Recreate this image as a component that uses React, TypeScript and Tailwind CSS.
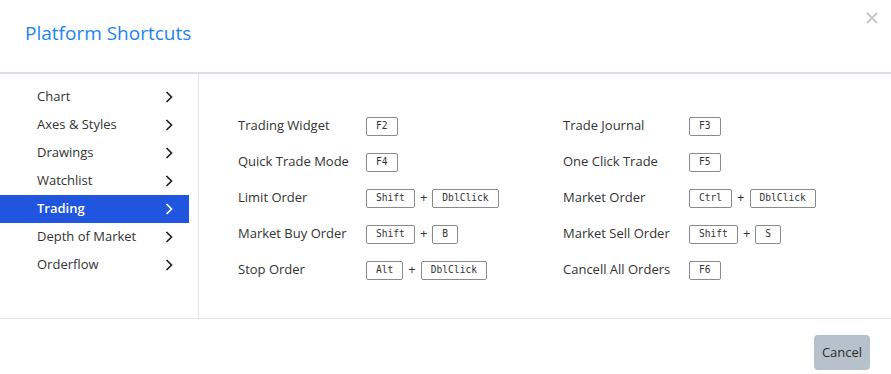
import React from "react";

const menu = ["Chart", "Axes & Styles", "Drawings", "Watchlist", "Trading", "Depth of Market", "Orderflow"];

type Row = { label: string; keys: string[] };
const left: Row[] = [
  { label: "Trading Widget", keys: ["F2"] },
  { label: "Quick Trade Mode", keys: ["F4"] },
  { label: "Limit Order", keys: ["Shift", "DblClick"] },
  { label: "Market Buy Order", keys: ["Shift", "B"] },
  { label: "Stop Order", keys: ["Alt", "DblClick"] },
];
const right: Row[] = [
  { label: "Trade Journal", keys: ["F3"] },
  { label: "One Click Trade", keys: ["F5"] },
  { label: "Market Order", keys: ["Ctrl", "DblClick"] },
  { label: "Market Sell Order", keys: ["Shift", "S"] },
  { label: "Cancell All Orders", keys: ["F6"] },
];

function Chevron({ white }: { white?: boolean }) {
  return (
    <svg width="8" height="12" viewBox="0 0 8 12" className={white ? "text-white" : "text-[#222]"}>
      <polyline points="1.5,1 6.5,6 1.5,11" fill="none" stroke="currentColor" strokeWidth="1.7" />
    </svg>
  );
}

function Key({ k }: { k: string }) {
  return (
    <span
      className="inline-flex h-[19px] items-center rounded-[2px] border border-[#8a8a8a] px-[9px] text-[9.6px] leading-none text-[#333]"
      style={{ fontFamily: '"DejaVu Sans Mono", "Liberation Mono", monospace' }}
    >
      {k}
    </span>
  );
}

function Column({ rows, labelW }: { rows: Row[]; labelW: string }) {
  return (
    <div className="flex w-[325px] flex-col">
      {rows.map((r) => (
        <div key={r.label} className="flex h-[36px] items-center">
          <div className={labelW + " text-[13px] text-[#333]"}>{r.label}</div>
          <div className="flex items-center">
            {r.keys.map((k, i) => (
              <React.Fragment key={k + i}>
                {i > 0 && <span className="mx-[5px] text-[13px] text-[#333]">+</span>}
                <Key k={k} />
              </React.Fragment>
            ))}
          </div>
        </div>
      ))}
    </div>
  );
}

export default function App() {
  return (
    <div
      className="relative flex h-[374px] w-[891px] flex-col bg-white"
      style={{ fontFamily: '"Open Sans", "Noto Sans", sans-serif' }}
    >
      <div className="flex h-[74px] shrink-0 items-start border-b-2 border-[#dfdee9] pl-[25px] pt-[20px]">
        <h1 className="text-[19px] leading-[26px] text-[#1a85f2]">Platform Shortcuts</h1>
      </div>
      <button className="absolute right-[13px] top-[12px] text-[#c9c9c9]" aria-label="close">
        <svg width="12" height="12" viewBox="0 0 12 12">
          <path d="M1 1 L11 11 M11 1 L1 11" stroke="currentColor" strokeWidth="2" />
        </svg>
      </button>
      <div className="flex h-[244px] shrink-0">
        <div className="w-[199px] shrink-0 border-r border-[#e3e2ee] pt-[9px]">
          {menu.map((m) => {
            const active = m === "Trading";
            return (
              <div
                key={m}
                className={
                  "flex h-[28px] w-[189px] items-center justify-between pl-[37px] pr-[16px] text-[13px] " +
                  (active ? "bg-[#1f55df] font-semibold text-white" : "text-[#333]")
                }
              >
                <span>{m}</span>
                <Chevron white={active} />
              </div>
            );
          })}
        </div>
        <div className="flex pl-[39px] pt-[34px]">
          <Column rows={left} labelW="w-[128px]" />
          <Column rows={right} labelW="w-[126px]" />
        </div>
      </div>
      <div className="flex flex-1 items-start justify-end border-t border-[#e5e5e5] pr-[21px] pt-[16px]">
        <button className="h-[35px] w-[56px] rounded-[4px] bg-[#b7c1cc] text-[13px] text-[#2b2b2b]">Cancel</button>
      </div>
    </div>
  );
}
